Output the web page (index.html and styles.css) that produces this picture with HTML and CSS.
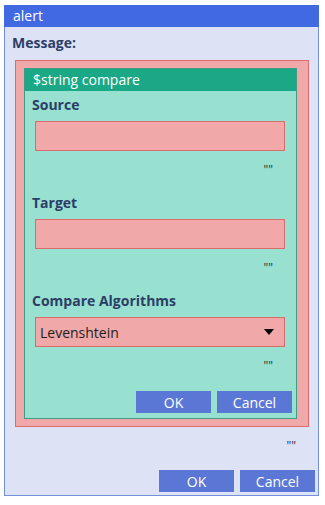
FILE: index.html
```html
<!DOCTYPE html>
<html lang="en">
<head>
  <meta charset="UTF-8">
  <title>alert</title>
  <link rel="stylesheet" href="styles.css">
</head>
<body>
  <div class="window">
    <div class="titlebar">alert</div>
    <div class="content">
      <div class="label outer-label">Message:</div>
      <div class="message-box">
        <div class="panel">
          <div class="panel-header">$string compare</div>
          <div class="panel-body">
            <div class="label">Source</div>
            <div class="field"></div>
            <div class="quote">""</div>

            <div class="label">Target</div>
            <div class="field"></div>
            <div class="quote">""</div>

            <div class="label">Compare Algorithms</div>
            <div class="field select">
              <span>Levenshtein</span>
              <span class="caret"></span>
            </div>
            <div class="quote">""</div>

            <div class="actions">
              <button class="btn">OK</button>
              <button class="btn">Cancel</button>
            </div>
          </div>
        </div>
      </div>
      <div class="quote outer-quote">""</div>
      <div class="actions outer-actions">
        <button class="btn">OK</button>
        <button class="btn">Cancel</button>
      </div>
    </div>
  </div>
</body>
</html>
```

FILE: styles.css
```css
:root {
  --window-bg: #dde3f5;
  --title: #4169e1;
  --pink: #f0a8a8;
  --pink-border: #dc6b6e;
  --teal: #1ba886;
  --mint: #98e0d0;
  --mint-border: #3c9c86;
  --button: #5b77d6;
  --label: #2c3e66;
}
* { box-sizing: border-box; }
body {
  margin: 0;
  padding: 5px 0 0 4px;
  font-family: "Open Sans", "Noto Sans", sans-serif;
  background: #ffffff;
}
.window {
  width: 315px;
  background: var(--window-bg);
  border: 1px solid #7390dc;
}
.titlebar {
  background: var(--title);
  color: #ffffff;
  font-size: 14px;
  height: 22px;
  line-height: 22px;
  padding-left: 9px;
  margin: -1px -1px 0;
}
.content {
  padding: 0 3px 3px 0;
}
.label {
  font-weight: bold;
  font-size: 14px;
  color: var(--label);
  height: 28px;
  line-height: 28px;
}
.outer-label {
  height: 33px;
  line-height: 32px;
  padding-left: 7px;
}
.message-box {
  margin-left: 10px;
  width: 294px;
  background: var(--pink);
  border: 1px solid var(--pink-border);
  padding: 7px 0 7px 8px;
}
.panel {
  width: 273px;
  border: 1px solid var(--mint-border);
  background: var(--mint);
}
.panel-header {
  background: var(--teal);
  color: #ffffff;
  font-size: 14px;
  height: 22px;
  line-height: 22px;
  padding-left: 8px;
}
.panel-body {
  padding: 0 4px 5px 7px;
}
.field {
  margin: 2px 0 0 3px;
  width: 250px;
  height: 30px;
  background: var(--pink);
  border: 1px solid var(--pink-border);
}
.select {
  display: flex;
  align-items: center;
  justify-content: space-between;
  padding: 0 10px 0 4px;
  font-size: 14px;
  color: #1e1e1e;
}
.caret {
  width: 0;
  height: 0;
  border-left: 5px solid transparent;
  border-right: 5px solid transparent;
  border-top: 6px solid #000000;
}
.quote {
  height: 38px;
  line-height: 38px;
  font-size: 12px;
  color: #2a3444;
  text-align: right;
  padding-right: 19px;
}
.actions {
  display: flex;
  justify-content: flex-end;
  gap: 6px;
  margin-top: 6px;
}
.btn {
  width: 75px;
  height: 22px;
  border: none;
  padding: 0;
  background: var(--button);
  color: #ffffff;
  font-family: inherit;
  font-size: 14px;
}
.outer-quote {
  padding-right: 19px;
}
.outer-actions {
  margin-top: 5px;
}
```
